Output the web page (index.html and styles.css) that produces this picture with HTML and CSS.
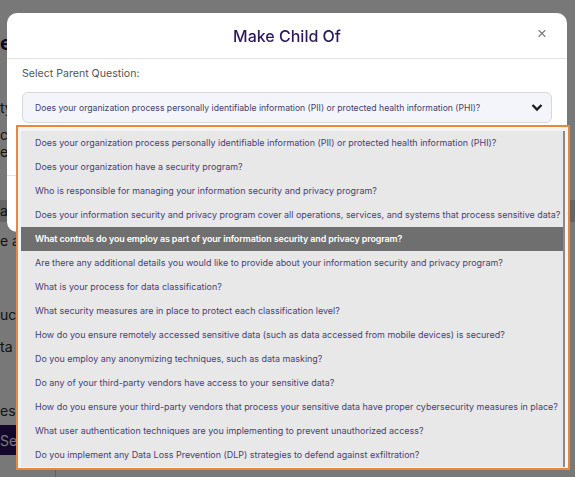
FILE: index.html
```html
<!DOCTYPE html>
<html>
<head>
    <title>Make Child Of</title>
    <link rel="stylesheet" href="styles.css">
</head>
<body>
    <div class="page">
        <h2 class="page-title">e</h2>
        <p class="page-line line-ty">ty</p>
        <p class="page-line line-c">c</p>
        <p class="page-line">e c</p>
        <div class="page-band">ar</div>
        <p class="page-line line-abc">e ab</p>
        <p class="page-line line-such">uch</p>
        <p class="page-line line-ta">ta</p>
        <p class="page-line line-yo">es</p>
        <button class="page-button">Sec</button>
        <div class="page-rule"></div>
    </div>

    <div class="overlay">
        <div class="modal">
            <div class="modal-header">
                <h3 class="modal-title">Make Child Of</h3>
                <button class="modal-close">&times;</button>
            </div>
            <div class="modal-body">
                <label class="field-label">Select Parent Question:</label>
                <div class="select-box">
                    <span>Does your organization process personally identifiable information (PII) or protected health information (PHI)?</span>
                    <svg class="chevron" width="12" height="9" viewBox="0 0 12 9">
                        <path d="M1.5 2 L6 6.5 L10.5 2" fill="none" stroke="#1e1e1e" stroke-width="2.4"/>
                    </svg>
                </div>
            </div>
            <div class="modal-footer"></div>
        </div>

        <div class="dropdown">
            <ul class="option-list">
                <li>Does your organization process personally identifiable information (PII) or protected health information (PHI)?</li>
                <li>Does your organization have a security program?</li>
                <li>Who is responsible for managing your information security and privacy program?</li>
                <li>Does your information security and privacy program cover all operations, services, and systems that process sensitive data?</li>
                <li class="selected">What controls do you employ as part of your information security and privacy program?</li>
                <li>Are there any additional details you would like to provide about your information security and privacy program?</li>
                <li>What is your process for data classification?</li>
                <li>What security measures are in place to protect each classification level?</li>
                <li>How do you ensure remotely accessed sensitive data (such as data accessed from mobile devices) is secured?</li>
                <li>Do you employ any anonymizing techniques, such as data masking?</li>
                <li>Do any of your third-party vendors have access to your sensitive data?</li>
                <li>How do you ensure your third-party vendors that process your sensitive data have proper cybersecurity measures in place?</li>
                <li>What user authentication techniques are you implementing to prevent unauthorized access?</li>
                <li>Do you implement any Data Loss Prevention (DLP) strategies to defend against exfiltration?</li>
            </ul>
        </div>
    </div>
</body>
</html>
```

FILE: styles.css
```css
body {
    margin: 0;
    font-family: 'Inter', 'Liberation Sans', sans-serif;
    background-color: #fff;
    color: #2b2b2b;
}

/* page behind the overlay */
.page {
    padding-top: 31px;
    overflow: hidden;
    height: 477px;
    box-sizing: border-box;
}

.page-title {
    margin: 0;
    font-size: 20px;
    font-weight: 700;
    color: #1c1140;
    white-space: nowrap;
}

.page-line {
    margin: 0;
    font-size: 14px;
    white-space: nowrap;
}

.line-ty {
    margin-top: 44px;
}

.line-c {
    margin-top: 10px;
}

.page-band {
    margin-top: 40px;
    height: 22px;
    background-color: #d6d6d6;
    font-size: 14px;
    line-height: 22px;
}

.line-abc {
    margin-top: 10px;
}

.line-such {
    margin-top: 57px;
}

.line-ta {
    margin-top: 15px;
}

.line-yo {
    margin-top: 47px;
}

.page-button {
    display: block;
    margin-top: 6px;
    width: 90px;
    height: 30px;
    border: none;
    padding: 0;
    text-align: left;
    background-color: #2a0f5c;
    color: #fff;
    font-family: inherit;
    font-size: 14px;
}

.page-rule {
    margin-left: 55px;
    width: 1px;
    height: 30px;
    background-color: #d0d0d0;
}

/* modal */
.overlay {
    position: fixed;
    inset: 0;
    background-color: rgba(0, 0, 0, 0.53);
    padding: 13px 8px 0 7px;
}

.modal {
    width: 560px;
    height: 219px;
    background-color: #fff;
    border-radius: 10px;
    display: flex;
    flex-direction: column;
}

.modal-header {
    height: 45px;
    border-bottom: 1px solid #e3e3e3;
    display: flex;
    align-items: center;
    justify-content: center;
    position: relative;
}

.modal-title {
    margin: 0;
    font-size: 16px;
    font-weight: 500;
    color: #2d1a5e;
}

.modal-close {
    position: absolute;
    right: 20px;
    top: 11px;
    border: none;
    background: none;
    padding: 0;
    font-size: 17px;
    color: #7a7a7a;
    font-family: 'Liberation Sans', sans-serif;
}

.modal-body {
    padding: 8px 15px 0;
    height: 108px;
    border-bottom: 1px solid #e3e3e3;
}

.field-label {
    display: block;
    font-size: 10.6px;
    color: #555;
}

.select-box {
    margin-top: 12px;
    height: 31px;
    box-sizing: border-box;
    border: 1px solid #d8d8d8;
    border-radius: 6px;
    background-color: #f4f5fa;
    display: flex;
    align-items: center;
    justify-content: space-between;
    padding: 0 8px 0 12px;
    font-size: 8.65px;
    color: #45406a;
}

/* open dropdown popup */
.dropdown {
    position: absolute;
    top: 125px;
    left: 16px;
    width: 554px;
    height: 345px;
    box-sizing: border-box;
    border: 2px solid #e8883a;
    background-color: #f4f4f4;
    padding: 4px 3px 1px 3px;
}

.option-list {
    list-style: none;
    margin: 0;
    padding: 0;
    height: 100%;
    background-color: #e8e8e8;
    border-right: 2px solid #8a8a8a;
}

.option-list li {
    height: 24px;
    line-height: 24px;
    padding-left: 14px;
    font-size: 8.95px;
    color: #46407a;
    white-space: nowrap;
}

.option-list li.selected {
    background-color: #6f6f6f;
    color: #fff;
    font-weight: 600;
    letter-spacing: -0.12px;
}
```
